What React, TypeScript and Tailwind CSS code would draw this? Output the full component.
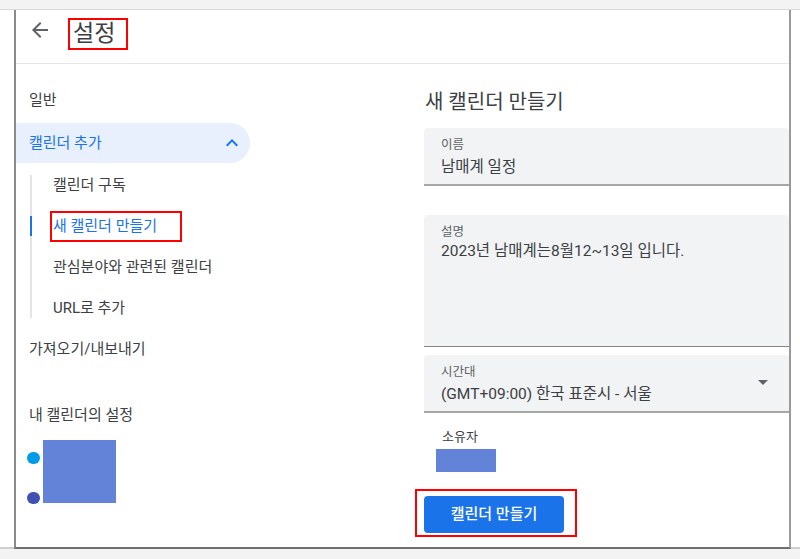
import React from 'react';

// 사이드바 하위 메뉴
const SUB_ITEMS = ['캘린더 구독', '새 캘린더 만들기', '관심분야와 관련된 캘린더', 'URL로 추가'];
const ACTIVE_SUB = '새 캘린더 만들기';

const ArrowBack: React.FC = () => (
  <svg width="24" height="24" viewBox="0 0 24 24" className="fill-[#5f6368]">
    <path d="M20 11H7.83l5.59-5.59L12 4l-8 8 8 8 1.41-1.41L7.83 13H20v-2z" />
  </svg>
);

const ExpandLess: React.FC = () => (
  <svg width="24" height="24" viewBox="0 0 24 24" className="fill-[#1a73e8]">
    <path d="M12 8l-6 6 1.41 1.41L12 10.83l4.59 4.58L18 14z" />
  </svg>
);

const ArrowDropDown: React.FC = () => (
  <svg width="24" height="24" viewBox="0 0 24 24" className="fill-[#5f6368]">
    <path d="M7 10l5 5 5-5z" />
  </svg>
);

const Sidebar: React.FC = () => (
  <aside className="w-[392px] shrink-0 pt-[16px] text-[15px] text-[#3c4043]">
    <div className="h-[40px] flex items-center pl-[13px]">일반</div>

    {/* 캘린더 추가 (펼침) */}
    <div className="mt-[3px] h-[40px] w-[234px] rounded-r-full bg-[#e8f0fe] flex items-center justify-between pl-[13px] pr-[6px] text-[#1a73e8]">
      <span>캘린더 추가</span>
      <ExpandLess />
    </div>

    <div className="mt-[12px] ml-[14px] border-l-2 border-[#e4e4e4] flex flex-col gap-[21px]">
      {SUB_ITEMS.map(item =>
        item === ACTIVE_SUB ? (
          <div key={item} className="relative h-[20px] flex items-center pl-[21px] text-[#1a73e8]">
            <span className="absolute -left-[2px] top-0 w-[2px] h-full bg-[#1a73e8]" />
            <span className="-ml-[3px] pl-[1px] w-[132px] h-[31px] shrink-0 flex items-center border-2 border-[#ff0000]">
              {item}
            </span>
          </div>
        ) : (
          <div key={item} className="h-[20px] flex items-center pl-[21px]">
            {item}
          </div>
        )
      )}
    </div>

    <div className="mt-[11px] h-[40px] flex items-center pl-[13px]">가져오기/내보내기</div>
    <div className="mt-[26px] h-[40px] flex items-center pl-[13px]">내 캘린더의 설정</div>

    {/* 내 캘린더 목록 (가려진 이름) */}
    <div className="mt-[5px] flex items-start pl-[11px]">
      <div className="flex flex-col pt-[12px] gap-[28px]">
        <span className="w-[13px] h-[12px] rounded-full bg-[#039be5]" />
        <span className="w-[13px] h-[12px] rounded-full bg-[#3f51b5]" />
      </div>
      <div className="ml-[3px] flex flex-col items-start">
        <div className="w-[73px] h-[63px] bg-[#6383d8]" />
      </div>
    </div>
  </aside>
);

const CreateCalendarForm: React.FC = () => (
  <section className="flex-1 min-w-0 pl-[16px] text-[#3c4043]">
    <h2 className="mt-[24px] h-[28px] flex items-center text-[20px] font-normal pl-[1px]">새 캘린더 만들기</h2>

    {/* 이름 */}
    <div className="mt-[12px] h-[58px] bg-[#f1f3f4] rounded-t-[4px] border-b-2 border-[#a6a6a6] pl-[17px] pt-[9px]">
      <div className="text-[12.5px] leading-[16px] text-[#5f6368]">이름</div>
      <div className="mt-[4px] text-[15.5px] leading-[20px]">남매계 일정</div>
    </div>

    {/* 설명 */}
    <div className="mt-[29px] h-[132px] bg-[#f1f3f4] rounded-t-[4px] border-b border-[#80868b] pl-[17px] pt-[9px]">
      <div className="text-[12.5px] leading-[16px] text-[#5f6368]">설명</div>
      <div className="mt-[1px] text-[15.5px] leading-[20px]">2023년 남매계는8월12~13일 입니다.</div>
    </div>

    {/* 시간대 */}
    <div className="mt-[8px] h-[58px] bg-[#f1f3f4] rounded-t-[4px] border-b-2 border-[#a6a6a6] flex items-start justify-between">
      <div className="pl-[17px] pt-[9px]">
        <div className="text-[12.5px] leading-[16px] text-[#5f6368]">시간대</div>
        <div className="mt-[4px] text-[15.5px] leading-[20px]">(GMT+09:00) 한국 표준시 - 서울</div>
      </div>
      <div className="self-center mr-[14px] mb-[2px]">
        <ArrowDropDown />
      </div>
    </div>

    {/* 소유자 */}
    <div className="mt-[15px] pl-[18px] text-[13px] leading-[18px]">소유자</div>
    <div className="mt-[3px] ml-[12px] w-[60px] h-[23px] bg-[#6383d8]" />

    <div className="mt-[17px] -ml-[9px] w-[162px] h-[48px] border-2 border-[#ff0000] pl-[7px] pt-[5px]">
      <button
        type="button"
        className="w-[140px] h-[37px] rounded-[4px] bg-[#1a73e8] text-white text-[15px] font-medium"
      >
        캘린더 만들기
      </button>
    </div>
  </section>
);

const App: React.FC = () => {
  return (
    <div className="w-[800px] h-[559px] overflow-hidden flex flex-col bg-[#f3f3f3] font-[Roboto,'Noto_Sans_CJK_KR',sans-serif]">
      <div className="h-[10px] shrink-0 border-b border-[#d9d9d9]" />

      <div className="h-[539px] shrink-0 flex">
        <div className="w-[14px] shrink-0 bg-white border-b-2 border-[#cfcfcf]" />

        {/* 설정 창 */}
        <div className="w-[777px] shrink-0 bg-white border-l-2 border-r-2 border-b-2 border-l-[#8a8a8a] border-r-[#9a9a9a] border-b-[#6f6f6f] flex flex-col">
          <header className="h-[54px] shrink-0 border-b border-[#e6e6e6] flex items-start pl-[12px]">
            <div className="mt-[8px]">
              <ArrowBack />
            </div>
            <div className="mt-[8px] ml-[16px] w-[60px] h-[32px] border-2 border-[#ff0000] pl-[3px]">
              <h1 className="text-[23px] leading-[27px] font-normal text-[#3c4043]">설정</h1>
            </div>
          </header>

          <div className="flex-1 flex min-h-0">
            <Sidebar />
            <CreateCalendarForm />
          </div>
        </div>

        <div className="flex-1 bg-white border-b-2 border-[#cfcfcf]" />
      </div>

      <div className="flex-1" />
    </div>
  );
};

export default App;
